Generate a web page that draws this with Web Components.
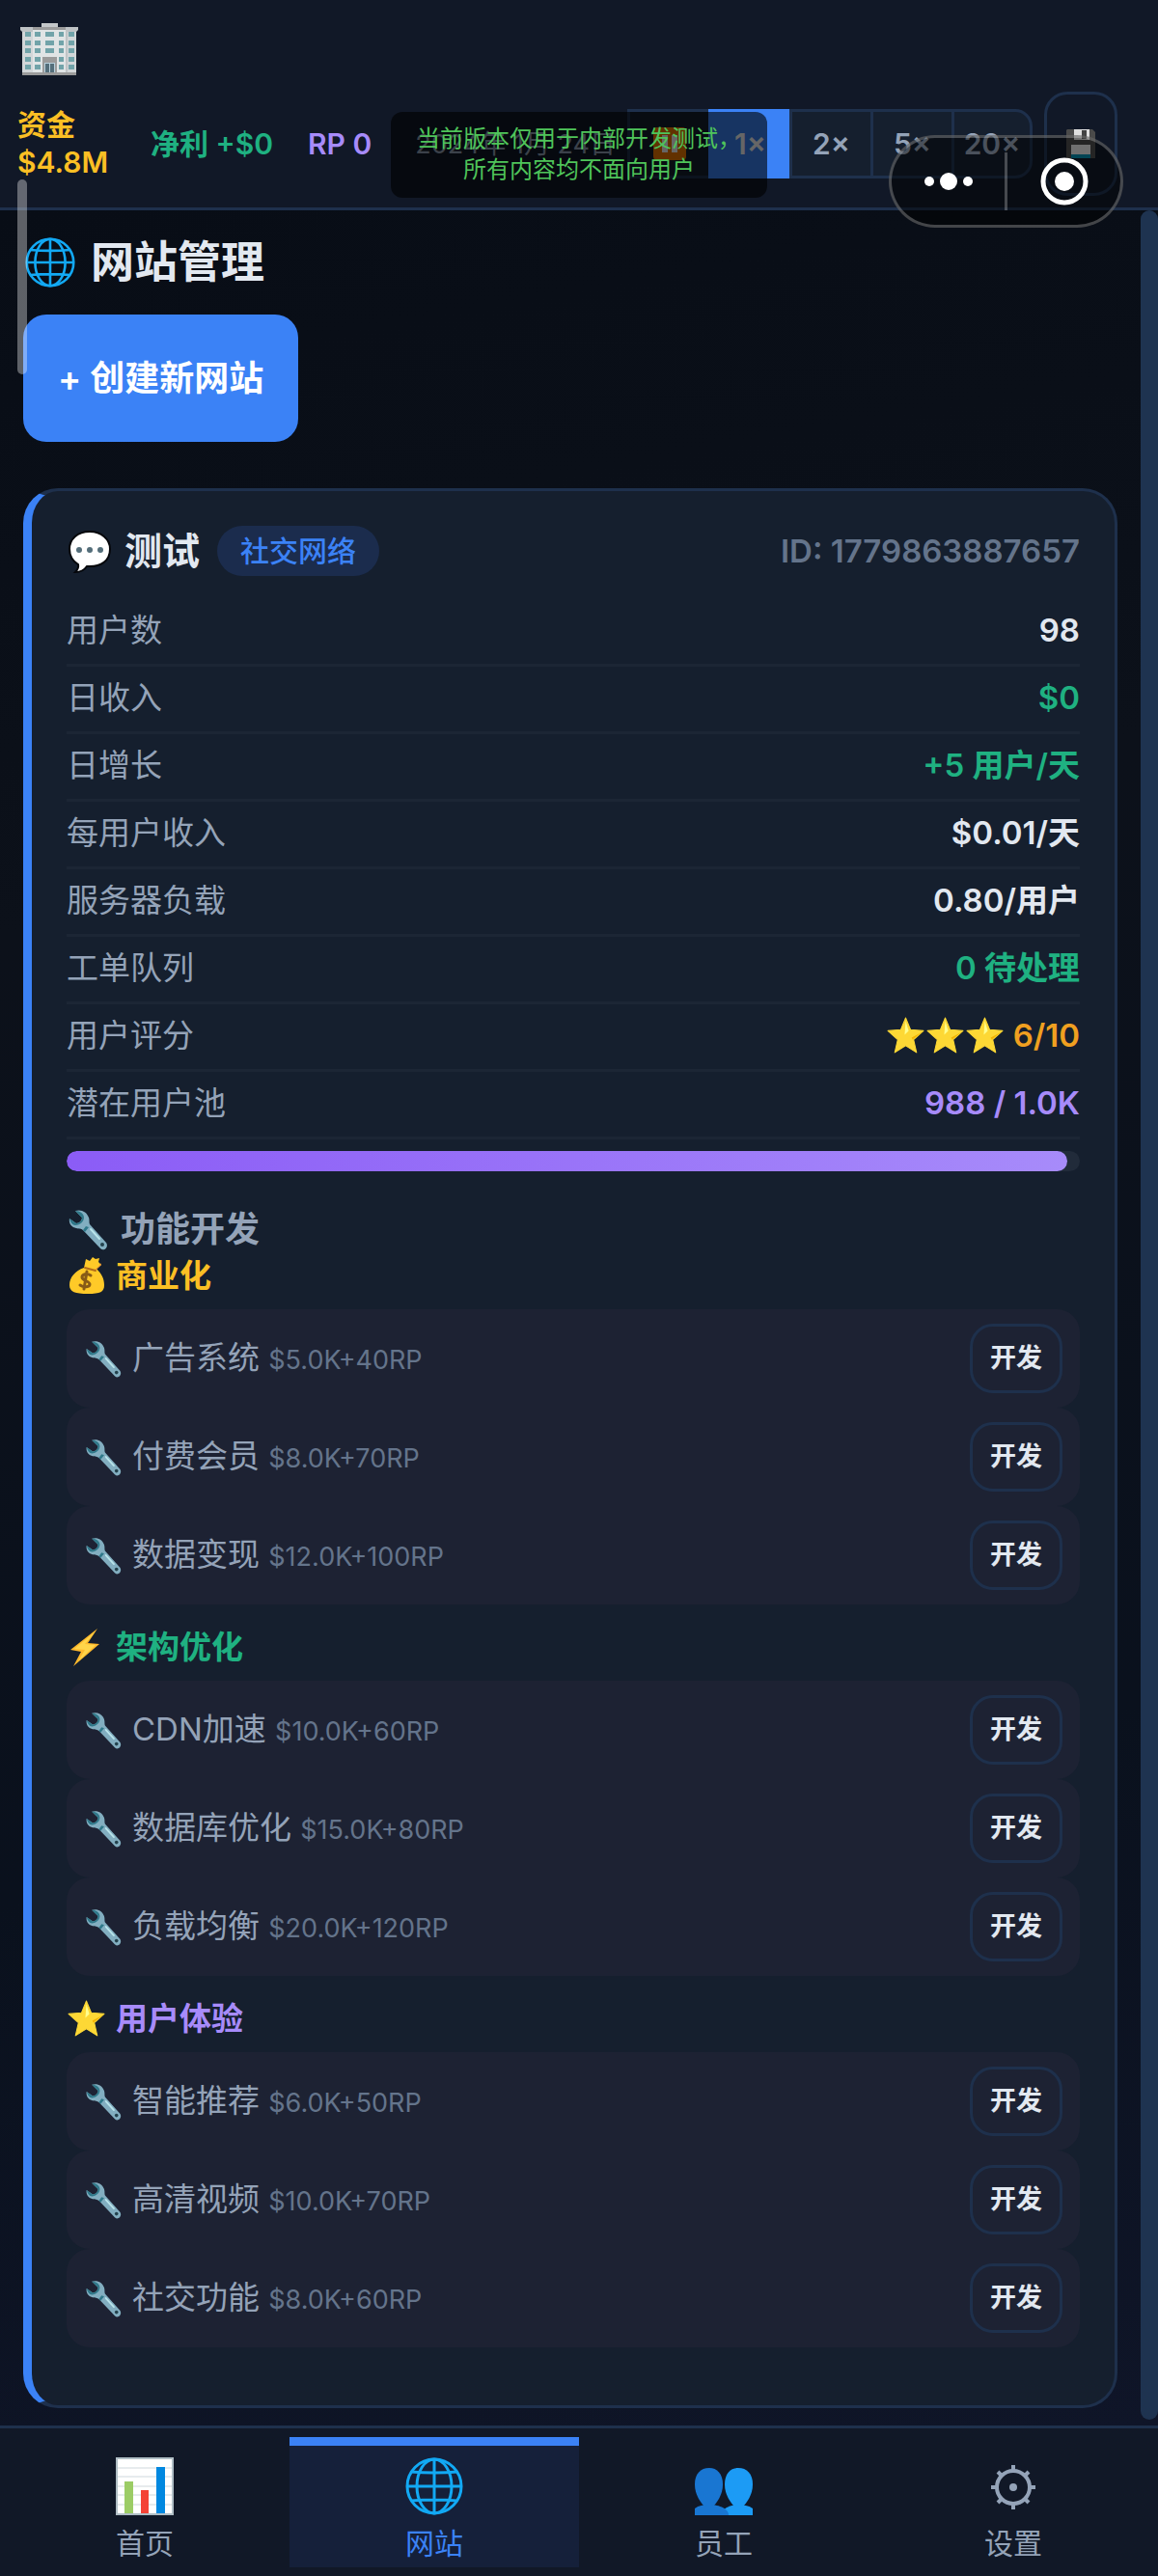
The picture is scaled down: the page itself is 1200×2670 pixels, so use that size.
<!DOCTYPE html>
<html lang="zh-CN">
<head>
<meta charset="utf-8">
<meta name="viewport" content="width=device-width, initial-scale=1">
<title>网站管理</title>
<style>
  :root {
    --accent: #3b82f6;
    --line: #1e304c;
    --panel: #111827;
    --card: #151f2e;
    --text: #e2e8f0;
    --muted: #94a3b8;
    --dim: #64748b;
    --green: #1fb181;
    --gold: #fbbf24;
    --orange: #f0a020;
    --purple: #a78bfa;
  }
  body {
    margin: 0;
    background: #0a0e17;
    color: var(--text);
    font-family: Inter, "Noto Sans CJK SC", sans-serif;
    font-size: 33px;
    line-height: 46px;
  }
</style>
</head>
<body>
<game-app></game-app>

<script>
const ICONS = {
  building: `<svg viewBox="0 0 60 60">
    <g transform="translate(0 3)">
    <path fill="#c4c7c9" d="M22 0h17v5H22z"/>
    <path fill="#bfc3c5" d="M0 4h60v3l-2 2v45H2V9L0 7z"/>
    <path fill="#e0e4e5" d="M13 7h34v46H13z"/>
    <path fill="#d2d6d8" d="M2 9h11v44H2zM49 9h9v44h-9z"/>
    <path fill="#9b9b9b" d="M13 4h34v3H13zM23 35h15v17H23zM2 51h56v3H2z"/>
    <path fill="#71a3a9" d="M5 9h6v5H5zM15 9h6v5h-6zM26 9h9v5h-9zM40 9h5v5h-5zM50 9h6v5h-6zM5 18h6v5H5zM15 18h6v5h-6zM26 18h9v5h-9zM40 18h5v5h-5zM50 18h6v5h-6zM5 26h6v5H5zM15 26h6v5h-6zM26 26h9v5h-9zM40 26h5v5h-5zM50 26h6v5h-6zM5 35h6v5H5zM15 35h6v5h-6zM40 35h5v5h-5zM50 35h6v5h-6zM5 43h6v5H5zM15 43h6v5h-6zM40 43h5v5h-5zM50 43h6v5h-6z"/>
    <path fill="#b8d0dc" d="M25 41h11v10H25z"/><path fill="#546e7a" d="M26 42h4v9h-4zM31 42h4v9h-4z"/>
    </g></svg>`,
  globe: `<svg viewBox="0 0 60 60" fill="none" stroke="#12a9f4" stroke-width="3">
    <circle cx="30" cy="30" r="28"/><ellipse cx="30" cy="30" rx="18" ry="28"/>
    <path d="M30 2v56M2 30h56M6 15q24 2 48 0M6 45q24-2 48 0"/></svg>`,
  bubble: `<svg viewBox="0 0 48 48">
    <path fill="#fff" stroke="#05070b" stroke-width="2" d="M24 4C11 4 3 12 3 22c0 8 4 13 9 16 1 4-1 6-3 8 6 0 10-3 12-6 15 1 24-6 24-18C45 12 36 4 24 4z"/>
    <g fill="#546e7a"><circle cx="13" cy="23" r="3"/><circle cx="24" cy="23" r="3"/><circle cx="35" cy="23" r="3"/></g></svg>`,
  wrench: `<svg viewBox="0 0 45 45">
    <path fill="#82aec0" d="M9 3c6-2 12 1 14 7 1 3 0 5 1 7l17 19c3 4-2 10-6 6L17 23c-2-2-4-1-7-2-5-1-8-5-7-10l7 5c3 0 6-3 6-6z"/>
    <path fill="#2f7889" d="M3 11l7 5c3 0 6-3 6-6L9 3c5 0 9 3 9 7s-4 8-9 8c-3 0-5-3-6-7zM17 23l3-4 3 1-4 5z"/>
    <path stroke="#b9e4ea" stroke-width="2" stroke-linecap="round" d="M25 22l9 10"/>
    <circle cx="37" cy="38" r="2" fill="#23424d"/></svg>`,
  money: `<svg viewBox="0 0 41 41">
    <path fill="#ffca28" d="M20 3l4 2 3-4 3 2 4-1-1 4 3 3-5 4c5 5 8 10 8 17 0 7-4 9-17 9S3 37 3 30c0-8 6-15 15-18z"/>
    <path fill="#f19534" d="M29 14c2-1 6-4 6-7l1 2-5 5z"/>
    <path stroke="#b26d1b" stroke-width="2" fill="none" stroke-linecap="round" d="M19 12l11 3"/>
    <path stroke="#875b17" stroke-width="3" fill="none" stroke-linecap="round" d="M25 20c-4-3-9-1-9 2s8 4 8 7-6 4-10 1M21 16l-3 18"/></svg>`,
  bolt: `<svg viewBox="0 0 41 41"><path fill="#ffb92c" d="M32 1L4 23l11 2L7 40l27-23-12-1z"/><path fill="#ffd54a" d="M30 4L8 22l11 1-7 12 18-17-11-1z"/></svg>`,
  star: `<svg viewBox="1 1 40 40"><path fill="#fdd835" stroke="#fdd835" stroke-linejoin="round" d="M21 3l5 12 13 1-10 9 3 13-11-7-11 7 3-13-10-9 13-1z"/><path fill="#ffff8d" d="M21 6l3 10-4 4z"/><path fill="#f4b400" d="M38 17l-11 6 1 2z"/></svg>`,
  chart: `<svg viewBox="0 0 60 60">
    <path fill="#fff" stroke="#b0bec5" stroke-width="2" d="M1 1h58v58H1z"/>
    <path stroke="#cfd8dc" stroke-width="1" d="M2 11h56M2 20h56M2 30h56M2 39h56M2 49h56"/>
    <path fill="#9ccc65" d="M9 25h9v33H9z"/><path fill="#f44336" d="M26 34h8v24h-8z"/><path fill="#0288e0" d="M42 10h9v48h-9z"/></svg>`,
  people: `<svg viewBox="0 0 60 60">
    <path fill="#1c9bf5" d="M45 11c9 0 15 6 15 17 0 11-6 19-11 24h-7c-5-5-11-13-11-24 0-11 6-17 14-17z"/>
    <path fill="#1c9bf5" d="M30 60v-6c4-3 10-5 15-5s11 1 15 4v7z"/>
    <path fill="#1976d2" d="M15 11c8 0 14 6 14 17 0 11-6 19-11 24h-7C6 47 0 39 0 28c0-11 6-17 15-17z"/>
    <path fill="#1976d2" d="M0 60v-7c4-3 9-4 14-4 9 0 21 3 21 11z"/></svg>`,
  gear: `<svg viewBox="0 0 60 60" fill="none" stroke="#94a3b8" stroke-width="4">
    <circle cx="30" cy="31" r="17"/><circle cx="30" cy="31" r="4" fill="#94a3b8" stroke="none"/>
    <path d="M30 14V8M30 48v6M13 31H7M47 31h6M18 19l-4-4M42 43l4 4M18 43l-4 4M42 19l4-4"/></svg>`,
  pause: `<svg viewBox="0 0 36 36"><rect x="1" y="1" width="34" height="34" rx="4" fill="#f57c00"/><path fill="#fff" d="M10 9h6v18h-6zM20 9h6v18h-6z"/></svg>`,
  floppy: `<svg viewBox="0 0 30 30">
    <path fill="#4a4a4a" d="M1 0h26l3 3v27H1L0 29V1z"/><path fill="#dedede" d="M8 0h16v11H8z"/><path fill="#424242" d="M16 1h5v9h-5z"/>
    <path fill="#e0e0e0" d="M5 16h20v10H5z"/><path fill="#0288a8" d="M5 26h20v4H5z"/></svg>`,
};

class EmojiIcon extends HTMLElement {
  connectedCallback() {
    if (this.shadowRoot) return;
    this.attachShadow({ mode: "open" }).innerHTML = `
      <style>
        :host { display: block; flex: none; width: var(--icon-size, 41px); height: var(--icon-size, 41px); }
        svg { display: block; width: 100%; height: 100%; }
      </style>
      ${ICONS[this.getAttribute("name")]}
    `;
  }
}
customElements.define("emoji-icon", EmojiIcon);

// base for the elements whose markup depends only on their attributes
class BaseElement extends HTMLElement {
  connectedCallback() {
    if (this.shadowRoot) return;
    const template = document.createElement("template");
    template.innerHTML = this.render();
    this.attachShadow({ mode: "open" }).appendChild(template.content.cloneNode(true));
  }
}

customElements.define("speed-control", class extends BaseElement {
  render() {
    return `
      <style>
        :host { display: flex; height: 72px; }
        button {
          display: flex;
          align-items: center;
          justify-content: center;
          box-sizing: border-box;
          width: 84px;
          padding: 0;
          border: 3px solid var(--line);
          border-right-width: 0;
          background: var(--card);
          color: var(--muted);
          font: inherit;
          font-weight: 600;
        }
        button:first-child { border-radius: 18px 0 0 18px; }
        button:last-child { border-radius: 0 18px 18px 0; border-right-width: 3px; }
        .active { background: var(--accent); border-color: var(--accent); color: #fff; }
        emoji-icon { --icon-size: 36px; }
      </style>
      <button type="button" aria-label="暂停"><emoji-icon name="pause"></emoji-icon></button>
      <button type="button" class="active">1×</button>
      <button type="button">2×</button>
      <button type="button">5×</button>
      <button type="button">20×</button>
    `;
  }
});

customElements.define("top-bar", class extends BaseElement {
  render() {
    return `
      <style>
        :host {
          display: block;
          padding: 21px 42px 12px 18px;
          border-bottom: 3px solid var(--line);
          background: var(--panel);
          font-size: 30px;
          line-height: 39px;
        }
        .logo { --icon-size: 60px; margin: 0 3px 14px; }
        .row, .stats, .tools { display: flex; align-items: center; }
        .row { justify-content: space-between; }
        .stats { gap: 36px; font-weight: 600; white-space: nowrap; }
        .tools { gap: 12px; }
        .money { color: var(--gold); min-width: 102px; }
        .money span { display: block; }
        .profit { color: var(--green); }
        .rp { color: var(--purple); }
        .date { color: var(--muted); font-size: 27px; white-space: nowrap; }
        .save {
          display: flex;
          align-items: center;
          justify-content: center;
          width: 76px;
          height: 108px;
          padding: 0;
          border: 3px solid var(--line);
          border-radius: 24px;
          background: none;
          --icon-size: 30px;
        }
      </style>
      <emoji-icon class="logo" name="building"></emoji-icon>
      <div class="row">
        <div class="stats">
          <div class="money"><span>资金</span><span>$4.8M</span></div>
          <div class="profit">净利 +$0</div>
          <div class="rp">RP 0</div>
        </div>
        <div class="tools">
          <time class="date" datetime="2024-01-24">2024年 1月 24日</time>
          <speed-control></speed-control>
          <button type="button" class="save" aria-label="保存"><emoji-icon name="floppy"></emoji-icon></button>
        </div>
      </div>
    `;
  }
});

customElements.define("stat-row", class extends BaseElement {
  render() {
    return `
      <style>
        :host {
          display: flex;
          align-items: center;
          justify-content: space-between;
          box-sizing: border-box;
          height: 70px;
          padding-bottom: 3px;
          border-bottom: 3px solid #1c2635;
        }
        .label { color: var(--muted); }
        .value {
          display: flex;
          align-items: center;
          color: var(--tone, var(--text));
          font-weight: 600;
        }
        ::slotted(emoji-icon:last-of-type) { margin-right: 9px; }
      </style>
      <span class="label">${this.getAttribute("label")}</span>
      <span class="value"><slot></slot></span>
    `;
  }
});

customElements.define("feature-item", class extends BaseElement {
  render() {
    return `
      <style>
        :host {
          display: flex;
          align-items: center;
          gap: 9px;
          padding: 15px 18px;
          border-radius: 24px;
          background: #1d2233;
        }
        .name { flex: 1; color: var(--muted); }
        small { color: var(--dim); font-size: 27px; }
        button {
          height: 72px;
          padding: 0 18px;
          border: 3px solid var(--line);
          border-radius: 24px;
          background: none;
          color: var(--text);
          font: inherit;
          font-size: 27px;
          font-weight: 600;
        }
      </style>
      <emoji-icon name="wrench"></emoji-icon>
      <span class="name"><slot></slot> <small>${this.getAttribute("cost")}</small></span>
      <button type="button">开发</button>
    `;
  }
});

customElements.define("feature-group", class extends BaseElement {
  render() {
    return `
      <style>
        :host { display: block; }
        :host(:not(:first-of-type)) { margin-top: 21px; }
        h4 {
          display: flex;
          align-items: center;
          gap: 10px;
          margin: 0 0 12px;
          color: var(--tone);
          font-size: 33px;
          font-weight: 600;
        }
      </style>
      <h4><emoji-icon name="${this.getAttribute("icon")}"></emoji-icon>${this.getAttribute("label")}</h4>
      <slot></slot>
    `;
  }
});

customElements.define("site-card", class extends BaseElement {
  render() {
    return `
      <style>
        :host {
          display: block;
          padding: 36px 36px 60px;
          border: 3px solid var(--line);
          border-left: 9px solid var(--accent);
          border-radius: 36px;
          background: var(--card);
        }
        header {
          display: flex;
          align-items: center;
          height: 52px;
          margin-bottom: 24px;
        }
        header emoji-icon { --icon-size: 48px; margin-right: 12px; }
        h3 { margin: 0 18px 0 0; font-size: 39px; font-weight: 700; }
        .badge {
          padding: 3px 24px;
          border-radius: 26px;
          background: #1b2c4d;
          color: var(--accent);
          font-size: 30px;
          font-weight: 500;
        }
        .id { margin-left: auto; color: var(--dim); font-weight: 600; }
      </style>
      <header>
        <emoji-icon name="bubble"></emoji-icon>
        <h3>${this.getAttribute("name")}</h3>
        <span class="badge">${this.getAttribute("kind")}</span>
        <span class="id">ID: ${this.getAttribute("site-id")}</span>
      </header>
      <slot></slot>
    `;
  }
});

customElements.define("pool-bar", class extends BaseElement {
  render() {
    return `
      <style>
        :host {
          display: block;
          height: 21px;
          margin: 12px 0 35px;
          border-radius: 12px;
          background: #212b3a;
          overflow: hidden;
        }
        div {
          width: ${this.getAttribute("percent")}%;
          height: 100%;
          border-radius: 12px;
          background: linear-gradient(90deg, #8b5cf6, #a78bfa);
        }
      </style>
      <div></div>
    `;
  }
});

customElements.define("nav-tab", class extends BaseElement {
  render() {
    return `
      <style>
        :host { display: block; flex: 1; }
        a {
          display: flex;
          flex-direction: column;
          align-items: center;
          gap: 8px;
          padding: 12px 0 4px;
          border-top: 9px solid transparent;
          color: var(--muted);
          font-size: 30px;
          line-height: 42px;
          text-decoration: none;
          --icon-size: 60px;
        }
        :host([active]) a { border-color: var(--accent); background: #15203a; color: var(--accent); }
      </style>
      <a href="#${this.getAttribute("icon")}"><emoji-icon name="${this.getAttribute("icon")}"></emoji-icon><slot></slot></a>
    `;
  }
});

customElements.define("notice-toast", class extends BaseElement {
  render() {
    return `
      <style>
        :host {
          position: absolute;
          top: 116px;
          left: 50%;
          box-sizing: border-box;
          width: 390px;
          margin-left: -195px;
          padding: 12px 24px 13px;
          border-radius: 12px;
          background: rgba(0, 0, 0, 0.6);
          color: #4fc45a;
          font-size: 24px;
          line-height: 32px;
          text-align: center;
          white-space: nowrap;
        }
      </style>
      <slot></slot>
    `;
  }
});

customElements.define("capsule-menu", class extends BaseElement {
  render() {
    return `
      <style>
        :host {
          position: absolute;
          top: 140px;
          right: 36px;
          display: flex;
          align-items: center;
          box-sizing: border-box;
          width: 243px;
          height: 96px;
          border: 3px solid rgba(255, 255, 255, 0.25);
          border-radius: 48px;
          background: rgba(0, 0, 0, 0.5);
        }
        button { flex: 1; height: 100%; padding: 0; border: 0; background: none; }
        i { width: 3px; height: 60px; background: rgba(255, 255, 255, 0.25); }
        svg { display: block; margin: auto; }
      </style>
      <button type="button" aria-label="更多">
        <svg width="60" height="50" fill="#fff"><circle cx="10" cy="25" r="5"/><circle cx="30" cy="25" r="9"/><circle cx="50" cy="25" r="5"/></svg>
      </button>
      <i></i>
      <button type="button" aria-label="关闭">
        <svg width="50" height="50" fill="#fff"><circle cx="25" cy="25" r="22" fill="none" stroke="#fff" stroke-width="5"/><circle cx="25" cy="25" r="10"/></svg>
      </button>
    `;
  }
});

const stats = [
  ["用户数", "98", "text"],
  ["日收入", "$0", "green"],
  ["日增长", "+5 用户/天", "green"],
  ["每用户收入", "$0.01/天", "text"],
  ["服务器负载", "0.80/用户", "text"],
  ["工单队列", "0 待处理", "green"],
  ["用户评分", '<emoji-icon name="star"></emoji-icon>'.repeat(3) + "6/10", "orange"],
  ["潜在用户池", "988 / 1.0K", "purple"],
];

const groups = [
  ["money", "商业化", "gold", [["广告系统", "$5.0K+40RP"], ["付费会员", "$8.0K+70RP"], ["数据变现", "$12.0K+100RP"]]],
  ["bolt", "架构优化", "green", [["CDN加速", "$10.0K+60RP"], ["数据库优化", "$15.0K+80RP"], ["负载均衡", "$20.0K+120RP"]]],
  ["star", "用户体验", "purple", [["智能推荐", "$6.0K+50RP"], ["高清视频", "$10.0K+70RP"], ["社交功能", "$8.0K+60RP"]]],
];

const statRow = ([label, value, tone]) =>
  `<stat-row label="${label}" style="--tone: var(--${tone})">${value}</stat-row>`;

const featureGroup = ([icon, label, tone, items]) => `
  <feature-group icon="${icon}" label="${label}" style="--tone: var(--${tone})">
    ${items.map(([name, cost]) => `<feature-item cost="${cost}">${name}</feature-item>`).join("")}
  </feature-group>`;

customElements.define("game-app", class extends BaseElement {
  render() {
    return `
      <style>
        :host { position: relative; display: flex; flex-direction: column; min-height: 100vh; }
        main {
          flex: 1;
          display: flex;
          background: linear-gradient(170deg, #080d16, #0c111a 30%, #0a111d 70%, #0f1528);
        }
        .content { flex: 1; padding: 24px 24px 18px; }
        h2, .section {
          display: flex;
          align-items: center;
          margin: 0;
          font-weight: 700;
        }
        h2 { gap: 16px; padding-left: 2px; font-size: 45px; line-height: 60px; --icon-size: 52px; }
        .section {
          gap: 11px;
          color: var(--muted);
          font-size: 36px;
          line-height: 50px;
          --icon-size: 45px;
        }
        .create {
          display: block;
          height: 132px;
          margin: 24px 0 48px;
          padding: 0 36px;
          border: 0;
          border-radius: 24px;
          background: var(--accent);
          color: #fff;
          font: inherit;
          font-size: 36px;
          font-weight: 600;
        }
        .scrollbar { width: 18px; margin-bottom: 6px; border-radius: 9px; background: #1e3350; }
        .thumb {
          position: absolute;
          top: 186px;
          left: 18px;
          width: 10px;
          height: 202px;
          border-radius: 5px;
          background: rgba(255, 255, 255, 0.35);
        }
        nav {
          display: flex;
          padding: 9px 0;
          border-top: 3px solid var(--line);
          background: var(--panel);
        }
      </style>
      <top-bar></top-bar>
      <main>
        <div class="content">
          <h2><emoji-icon name="globe"></emoji-icon>网站管理</h2>
          <button type="button" class="create">+ 创建新网站</button>
          <site-card name="测试" kind="社交网络" site-id="1779863887657">
            ${stats.map(statRow).join("")}
            <pool-bar percent="98.8"></pool-bar>
            <h3 class="section"><emoji-icon name="wrench"></emoji-icon>功能开发</h3>
            ${groups.map(featureGroup).join("")}
          </site-card>
        </div>
        <div class="scrollbar"></div>
      </main>
      <nav>
        <nav-tab icon="chart">首页</nav-tab>
        <nav-tab icon="globe" active>网站</nav-tab>
        <nav-tab icon="people">员工</nav-tab>
        <nav-tab icon="gear">设置</nav-tab>
      </nav>
      <div class="thumb"></div>
      <notice-toast>当前版本仅用于内部开发测试，<br>所有内容均不面向用户</notice-toast>
      <capsule-menu></capsule-menu>
    `;
  }
});
</script>
</body>
</html>
